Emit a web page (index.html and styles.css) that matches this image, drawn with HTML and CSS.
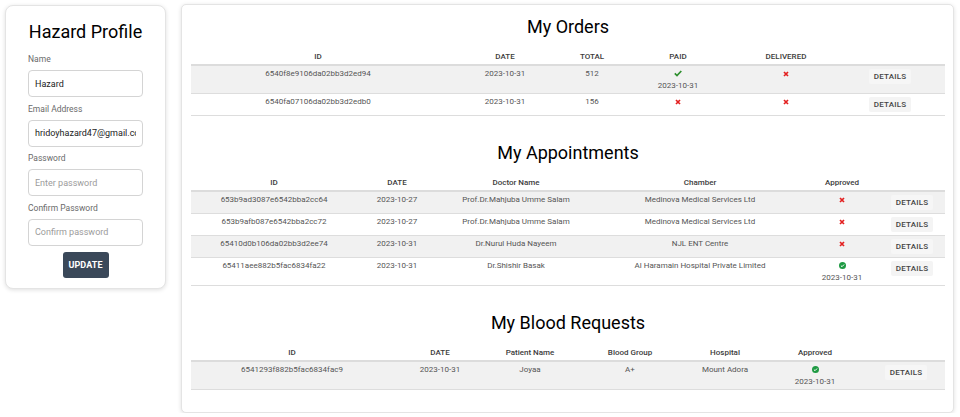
FILE: index.html
```html
<!DOCTYPE html>
<html lang="en">
<head>
<meta charset="utf-8">
<title>Hazard Profile</title>
<link rel="stylesheet" href="styles.css">
</head>
<body>
<div class="page">
  <aside class="card profile">
    <h1 class="profile-title">Hazard Profile</h1>
    <form class="profile-form">
      <label class="field-label">Name</label>
      <input class="field-input" type="text" value="Hazard">
      <label class="field-label">Email Address</label>
      <input class="field-input" type="text" value="hridoyhazard47@gmail.com">
      <label class="field-label">Password</label>
      <input class="field-input" type="password" placeholder="Enter password">
      <label class="field-label">Confirm Password</label>
      <input class="field-input" type="password" placeholder="Confirm password">
      <button class="btn-update" type="button">UPDATE</button>
    </form>
  </aside>

  <main class="card panel">
    <section class="block">
      <h2 class="block-title">My Orders</h2>
      <table class="tbl">
        <colgroup>
          <col class="w254"><col class="w120"><col class="w54"><col class="w118"><col class="w98"><col class="w110">
        </colgroup>
        <thead>
          <tr><th>ID</th><th>DATE</th><th>TOTAL</th><th>PAID</th><th>DELIVERED</th><th></th></tr>
        </thead>
        <tbody>
          <tr>
            <td>6540f8e9106da02bb3d2ed94</td><td>2023-10-31</td><td>512</td>
            <td><span class="ico"><svg width="8" height="7" viewBox="0 0 8 7"><polyline points="0.8,3.4 3,5.6 7.3,1" fill="none" stroke="#2e8f2e" stroke-width="1.7"/></svg></span><span class="sub">2023-10-31</span></td>
            <td><span class="ico"><svg width="6" height="6" viewBox="0 0 6 6"><path d="M1 1L5 5M5 1L1 5" stroke="#e32020" stroke-width="1.7"/></svg></span></td>
            <td><button class="btn-details" type="button">DETAILS</button></td>
          </tr>
          <tr>
            <td>6540fa07106da02bb3d2edb0</td><td>2023-10-31</td><td>156</td>
            <td><span class="ico"><svg width="6" height="6" viewBox="0 0 6 6"><path d="M1 1L5 5M5 1L1 5" stroke="#e32020" stroke-width="1.7"/></svg></span></td>
            <td><span class="ico"><svg width="6" height="6" viewBox="0 0 6 6"><path d="M1 1L5 5M5 1L1 5" stroke="#e32020" stroke-width="1.7"/></svg></span></td>
            <td><button class="btn-details" type="button">DETAILS</button></td>
          </tr>
        </tbody>
      </table>
    </section>

    <section class="block">
      <h2 class="block-title">My Appointments</h2>
      <table class="tbl">
        <colgroup>
          <col class="w166"><col class="w80"><col class="w158"><col class="w210"><col class="w74"><col class="w66">
        </colgroup>
        <thead>
          <tr><th>ID</th><th>DATE</th><th>Doctor Name</th><th>Chamber</th><th>Approved</th><th></th></tr>
        </thead>
        <tbody>
          <tr>
            <td>653b9ad3087e6542bba2cc64</td><td>2023-10-27</td><td>Prof.Dr.Mahjuba Umme Salam</td><td>Medinova Medical Services Ltd</td>
            <td><span class="ico"><svg width="6" height="6" viewBox="0 0 6 6"><path d="M1 1L5 5M5 1L1 5" stroke="#e32020" stroke-width="1.7"/></svg></span></td>
            <td><button class="btn-details" type="button">DETAILS</button></td>
          </tr>
          <tr>
            <td>653b9afb087e6542bba2cc72</td><td>2023-10-27</td><td>Prof.Dr.Mahjuba Umme Salam</td><td>Medinova Medical Services Ltd</td>
            <td><span class="ico"><svg width="6" height="6" viewBox="0 0 6 6"><path d="M1 1L5 5M5 1L1 5" stroke="#e32020" stroke-width="1.7"/></svg></span></td>
            <td><button class="btn-details" type="button">DETAILS</button></td>
          </tr>
          <tr>
            <td>65410d0b106da02bb3d2ee74</td><td>2023-10-31</td><td>Dr.Nurul Huda Nayeem</td><td>NJL ENT Centre</td>
            <td><span class="ico"><svg width="6" height="6" viewBox="0 0 6 6"><path d="M1 1L5 5M5 1L1 5" stroke="#e32020" stroke-width="1.7"/></svg></span></td>
            <td><button class="btn-details" type="button">DETAILS</button></td>
          </tr>
          <tr>
            <td>65411aee882b5fac6834fa22</td><td>2023-10-31</td><td>Dr.Shishir Basak</td><td>Al Haramain Hospital Private Limited</td>
            <td><span class="ico"><svg width="7" height="7" viewBox="0 0 7 7"><circle cx="3.5" cy="3.5" r="3.5" fill="#1e9a43"/><polyline points="1.9,3.6 3,4.7 5.1,2.5" fill="none" stroke="#fff" stroke-width="1"/></svg></span><span class="sub">2023-10-31</span></td>
            <td><button class="btn-details" type="button">DETAILS</button></td>
          </tr>
        </tbody>
      </table>
    </section>

    <section class="block">
      <h2 class="block-title">My Blood Requests</h2>
      <table class="tbl">
        <colgroup>
          <col class="w202"><col class="w94"><col class="w86"><col class="w114"><col class="w76"><col class="w104"><col class="w78">
        </colgroup>
        <thead>
          <tr><th>ID</th><th>DATE</th><th>Patient Name</th><th>Blood Group</th><th>Hospital</th><th>Approved</th><th></th></tr>
        </thead>
        <tbody>
          <tr>
            <td>6541293f882b5fac6834fac9</td><td>2023-10-31</td><td>Joyaa</td><td>A+</td><td>Mount Adora</td>
            <td><span class="ico"><svg width="7" height="7" viewBox="0 0 7 7"><circle cx="3.5" cy="3.5" r="3.5" fill="#1e9a43"/><polyline points="1.9,3.6 3,4.7 5.1,2.5" fill="none" stroke="#fff" stroke-width="1"/></svg></span><span class="sub">2023-10-31</span></td>
            <td><button class="btn-details" type="button">DETAILS</button></td>
          </tr>
        </tbody>
      </table>
    </section>
  </main>
</div>
</body>
</html>
```

FILE: styles.css
```css
* { box-sizing: border-box; }

html, body {
  margin: 0;
  background: #ffffff;
}

body {
  font-family: Roboto, "Liberation Sans", Arial, sans-serif;
  color: #222;
  padding: 4px 6px 0 5px;
}

.page {
  display: flex;
  align-items: flex-start;
  gap: 15px;
}

.card {
  background: #fff;
  border: 1px solid #e4e4e4;
  box-shadow: 0 1px 4px rgba(0, 0, 0, 0.13);
}

/* ---------- Profile card ---------- */
.profile {
  width: 161px;
  flex: none;
  margin-top: 1px;
  border-radius: 8px;
  padding: 15px 22px 10px;
}

.profile-title {
  margin: 0 0 10px;
  font-size: 18px;
  line-height: 22px;
  font-weight: 400;
  text-align: center;
  color: #000;
  white-space: nowrap;
}

.profile-form {
  display: flex;
  flex-direction: column;
}

.field-label {
  font-size: 8.5px;
  line-height: 12px;
  color: #6a6a6a;
  margin-bottom: 5px;
}

.field-input {
  height: 27px;
  width: 100%;
  border: 1px solid #d4d4d4;
  border-radius: 4px;
  padding: 0 6px;
  font-family: Roboto, "Liberation Sans", Arial, sans-serif;
  font-size: 9px;
  color: #222;
  margin: 0 0 5.5px;
  outline: none;
  background: #fff;
}

.field-input::placeholder {
  color: #9b9b9b;
}

.btn-update {
  align-self: center;
  margin-top: 0.5px;
  width: 46px;
  height: 26px;
  border: none;
  border-radius: 3px;
  background: #3a4859;
  color: #fff;
  font-family: Roboto, "Liberation Sans", Arial, sans-serif;
  font-size: 9px;
  font-weight: 700;
  letter-spacing: 0.1px;
  padding: 0;
}

/* ---------- Right panel ---------- */
.panel {
  flex: 1;
  border-radius: 5px;
  padding: 11px 8px 22px 9px;
}

.block + .block {
  margin-top: 26px;
}

.block-title {
  margin: 0 0 10px;
  font-size: 18px;
  line-height: 22px;
  font-weight: 400;
  text-align: center;
  color: #000;
}

.tbl {
  width: 100%;
  table-layout: fixed;
  border-collapse: collapse;
  font-size: 8px;
  color: #555;
}

.tbl th {
  padding: 4px 3px 2px;
  line-height: 10px;
  font-weight: 500;
  color: #3c3c3c;
  text-align: center;
  border-bottom: 2px solid #dcdcdc;
  white-space: nowrap;
}

.tbl td {
  padding: 3px 3px;
  line-height: 9px;
  text-align: center;
  vertical-align: top;
  border-bottom: 1px solid #dddddd;
  white-space: nowrap;
}

.tbl tbody tr:nth-child(odd) {
  background: #f1f1f1;
}

.ico {
  display: flex;
  justify-content: center;
  align-items: center;
  height: 9px;
}

.ico svg { display: block; }

.sub {
  display: block;
  margin-top: 3px;
}

.btn-details {
  display: inline-block;
  height: 15px;
  line-height: 15px;
  padding: 0 5px;
  border: none;
  border-radius: 2px;
  background: #f4f4f4;
  color: #444;
  font-family: Roboto, "Liberation Sans", Arial, sans-serif;
  font-size: 8px;
  font-weight: 500;
  letter-spacing: 0.2px;
  vertical-align: top;
}

.tbl tbody tr:nth-child(odd) .btn-details {
  background: #f6f6f6;
}

/* column widths */
.w54 { width: 54px; }
.w66 { width: 66px; }
.w74 { width: 74px; }
.w76 { width: 76px; }
.w78 { width: 78px; }
.w80 { width: 80px; }
.w86 { width: 86px; }
.w94 { width: 94px; }
.w98 { width: 98px; }
.w104 { width: 104px; }
.w110 { width: 110px; }
.w114 { width: 114px; }
.w118 { width: 118px; }
.w120 { width: 120px; }
.w158 { width: 158px; }
.w166 { width: 166px; }
.w202 { width: 202px; }
.w210 { width: 210px; }
.w254 { width: 254px; }
```
